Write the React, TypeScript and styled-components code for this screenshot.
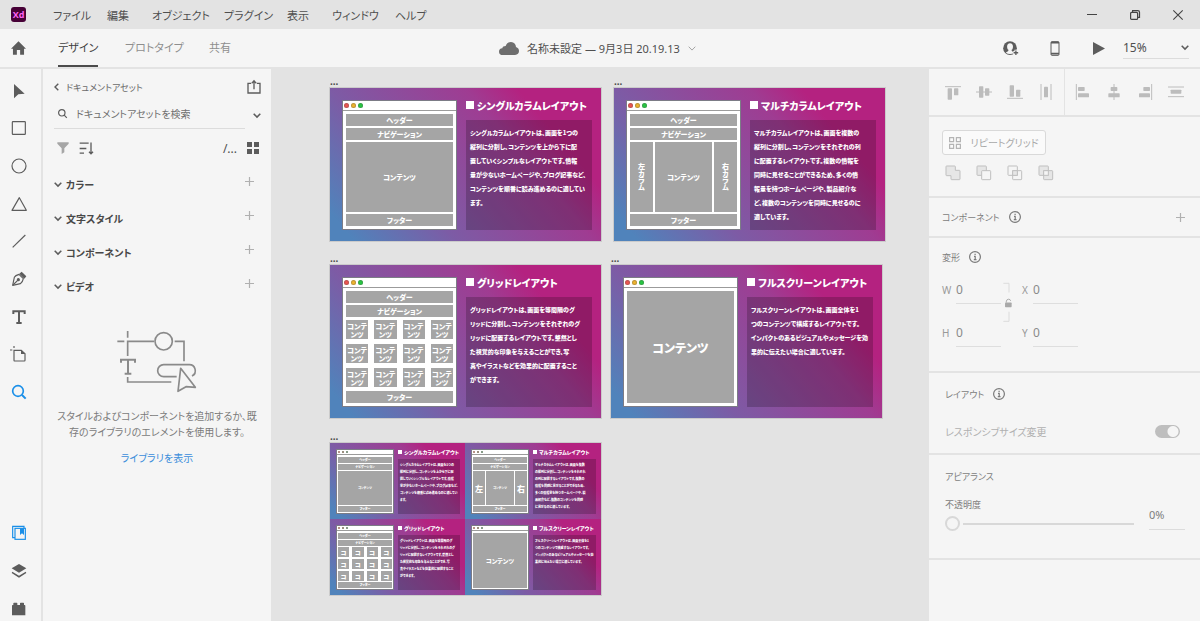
import React from "react";
import styled, { createGlobalStyle, css } from "styled-components";

const LINE = "#e3e3e3";
const PANEL = "#f5f5f5";
const DARK = "#5c5c5c";

const GlobalStyle = createGlobalStyle`
  * { box-sizing: border-box; }
  html, body, #root { height: 100%; }
  body {
    margin: 0;
    background: ${LINE};
    color: #4f4f4f;
    font-family: "Noto Sans", "Noto Sans CJK JP", sans-serif;
    font-size: 12px;
    font-feature-settings: "palt";
    overflow: hidden;
  }
  button, input, select { font: inherit; color: inherit; font-feature-settings: inherit; }
  h2, h3, p { margin: 0; font-weight: inherit; font-size: inherit; }
`;

/* ---------- shared parts ---------- */

const PlainButton = styled.button`
  display: flex;
  align-items: center;
  justify-content: center;
  padding: 0;
  border: 0;
  background: none;
  white-space: nowrap;
`;

const IconButton = styled(PlainButton)<{ $w?: number; $h?: number }>`
  width: ${(p) => p.$w ?? 24}px;
  height: ${(p) => p.$h ?? 24}px;
  flex: none;
`;

const Svg = styled.svg`
  display: block;
  flex: none;
  overflow: visible;
`;

type IconProps = {
  box: string;
  w: number;
  h: number;
  color?: string;
  stroke?: number;
  children: React.ReactNode;
};

/* Line icon: children inherit an outline unless they set their own fill. */
const Icon = ({ box, w, h, color = DARK, stroke = 4, children }: IconProps) => (
  <Svg viewBox={box} width={w} height={h} fill="none" stroke={color} color={color} strokeWidth={stroke} aria-hidden="true">
    {children}
  </Svg>
);

const Solid = ({ box, w, h, color = DARK, children }: IconProps) => (
  <Svg viewBox={box} width={w} height={h} fill={color} aria-hidden="true">
    {children}
  </Svg>
);

const ChevronDown = ({ color = DARK, thin = false }: { color?: string; thin?: boolean }) => (
  <Icon box="0 0 8 5" w={8} h={5} color={color} stroke={thin ? 1 : 1.5}>
    <path d="M.7 .7 4 4.1 7.3 .7" />
  </Icon>
);

const Plus = () => (
  <Icon box="0 0 9 9" w={9} h={9} color="#b0b0b0" stroke={1.2}>
    <path d="M4.5 0v9M0 4.5h9" />
  </Icon>
);

/* ---------- page frame ---------- */

const Page = styled.div`
  display: flex;
  flex-direction: column;
  height: 100vh;
  min-width: 900px;
`;

const TitleBar = styled.header`
  display: flex;
  align-items: center;
  height: 29px;
  flex: none;
  padding: 0 6px 0 11px;
`;

const Logo = styled.div`
  display: grid;
  place-items: center;
  width: 15px;
  height: 15px;
  border-radius: 3px;
  background: #470137;
  color: #ff61f6;
  font: bold 9px/15px "Open Sans", sans-serif;
  margin-right: 27px;
`;

const Menu = styled.nav`
  display: grid;
  grid-template-columns: 54px 45px 72px 63px 45px 63px auto;
  flex: 1;
`;

const MenuItem = styled(PlainButton)`
  justify-content: flex-start;
  height: 28px;
  font-size: 11px;
`;

const WindowButtons = styled.div`
  display: flex;
  gap: 11px;
`;

const Toolbar = styled.div`
  display: flex;
  height: 40px;
  flex: none;
  background: ${PANEL};
  border-bottom: 2px solid ${LINE};
`;

const ToolbarSide = styled.div<{ $end?: boolean }>`
  flex: 1;
  display: flex;
  align-items: center;
  ${(p) => (p.$end ? "justify-content: flex-end; padding-right: 11px;" : "padding-left: 6px;")}
`;

const Tabs = styled.div`
  display: grid;
  grid-template-columns: 67px 84px auto;
  justify-items: start;
  height: 38px;
  margin-left: 28px;
`;

const Tab = styled(PlainButton)<{ $active?: boolean }>`
  height: 38px;
  font-size: 11px;
  color: ${(p) => (p.$active ? "#3f3f3f" : "#8e8e8e")};
  border-bottom: 2px solid ${(p) => (p.$active ? "#4b4b4b" : "transparent")};
`;

const DocTitle = styled(PlainButton)`
  gap: 8px;
  font-size: 11px;
`;

const TopActions = styled.div`
  display: flex;
  gap: 20px;
  margin-right: 12px;
`;

const ZoomBox = styled.label`
  position: relative;
  width: 66px;
  height: 22px;
  border-bottom: 1px solid #dcdcdc;

  select {
    appearance: none;
    width: 100%;
    height: 20px;
    padding: 0;
    border: 0;
    background: none;
    font-size: 12px;
  }
  svg {
    position: absolute;
    right: 0;
    top: 8px;
    pointer-events: none;
  }
`;

const Body = styled.div`
  display: flex;
  flex: 1;
  min-height: 0;
`;

/* ---------- tool rail ---------- */

const Rail = styled.aside`
  width: 43px;
  flex: none;
  display: flex;
  flex-direction: column;
  justify-content: space-between;
  padding-top: 3px;
  background: ${PANEL};
  border-right: 2px solid ${LINE};
`;

const Tools = styled.div`
  display: grid;
  grid-auto-rows: 1fr;
  height: 339px;
  width: 37px;
`;

const RailBottom = styled.div`
  display: flex;
  flex-direction: column;
  gap: 14px;
  width: 37px;
`;

const Tool = styled(PlainButton)`
  width: 37px;
  min-height: 24px;
`;

/* ---------- assets panel ---------- */

const Assets = styled.aside`
  width: 228px;
  flex: none;
  padding: 4px 2px 0 11px;
  background: ${PANEL};
`;

const Row = styled.div<{ $h: number }>`
  display: flex;
  align-items: center;
  height: ${(p) => p.$h}px;
`;

const Spacer = styled.div`
  flex: 1;
`;

const BackButton = styled(PlainButton)`
  gap: 7px;
  font-size: 9px;
  color: #6a6a6a;
`;

const SearchField = styled.label`
  display: flex;
  align-items: center;
  gap: 9px;
  flex: 1;
  height: 28px;
  padding: 0 0 2px 4px;
  border-bottom: 1px solid #dcdcdc;

  input {
    flex: 1;
    min-width: 0;
    padding: 0;
    border: 0;
    outline: 0;
    background: none;
    font-size: 10px;
  }
  input::placeholder {
    color: #6f6f6f;
    opacity: 1;
  }
`;

const Category = styled(PlainButton)`
  gap: 4px;
  font-size: 10px;
  font-weight: 700;
  color: #484848;
`;

const CategoryRow = styled(Row)`
  & > :last-child {
    align-self: flex-start;
    margin-right: 8px;
  }
`;

const Empty = styled.div`
  display: flex;
  flex-direction: column;
  align-items: center;
  padding-top: 27px;
  padding-right: 9px;
  font-size: 10px;
  line-height: 16px;
  color: #7b7b7b;
  text-align: center;

  p { margin: 15px 0 10px; white-space: nowrap; }
  a { color: #3a8ddb; text-decoration: none; }
`;

/* ---------- canvas ---------- */

const Canvas = styled.main`
  position: relative;
  flex: 1;
  min-width: 0;
  overflow: hidden;
  font-family: "Noto Sans CJK JP", sans-serif;
  color: #fff;
  font-weight: 900;
`;

const Artboard = styled.section<{ $x: number; $y: number }>`
  position: absolute;
  left: ${(p) => p.$x}px;
  top: ${(p) => p.$y}px;
  width: 271px;
`;

const ArtboardName = styled.h2`
  height: 10px;
  font: 700 10px/6px "Noto Sans", sans-serif;
  color: #4a4a4a;
`;

const Sheet = styled.div`
  display: grid;
  grid-template-columns: minmax(0, 1fr);
  box-shadow: 0 0 0 1px #cbcbcb;
`;

const SheetGrid = styled(Sheet)`
  grid-template-columns: 135px 136px;
`;

type Size = { $mini?: boolean };

const Slide = styled.article<Size>`
  display: flex;
  background: linear-gradient(50deg, #5083bb 6%, #7d5ba5 32%, #9f3c92 66%, #b42280 79%);
  ${(p) =>
    p.$mini
      ? css`height: 76px; gap: 4px; padding: 6px 5px 5px 6px;`
      : css`height: 153px; gap: 9px; padding: 12px 9px 11px 12px;`}
`;

const Browser = styled.div<Size>`
  display: flex;
  flex-direction: column;
  flex: none;
  width: ${(p) => (p.$mini ? 58 : 115)}px;
  background: #fff;
  border: 1px solid #7c7c86;
`;

const BrowserBar = styled.div<Size>`
  display: flex;
  align-items: center;
  flex: none;
  gap: 2px;
  height: ${(p) => (p.$mini ? 5 : 10)}px;
  padding-left: 1px;
  border-bottom: 1px solid #9b9b9b;
`;

const Dot = styled.i<Size & { $c: string }>`
  width: ${(p) => (p.$mini ? 2 : 5)}px;
  height: ${(p) => (p.$mini ? 2 : 5)}px;
  border-radius: 50%;
  background: ${(p) => p.$c};
  ${(p) => !p.$mini && "box-shadow: inset 0 0 0 1px rgba(90, 90, 90, 0.35);"}
`;

const BrowserBody = styled.div<Size>`
  flex: 1;
  min-height: 0;
  display: flex;
  flex-direction: column;
  ${(p) =>
    p.$mini ? css`gap: 1px; padding: 2px 1px 1px 1px;` : css`gap: 2px; padding: 3px;`}
`;

const Block = styled.div<{ $h?: number; $w?: number; $fs: number; $vertical?: boolean }>`
  display: flex;
  align-items: center;
  justify-content: center;
  min-width: 0;
  overflow: hidden;
  white-space: pre;
  text-align: center;
  background: #a5a5a5;
  flex: ${(p) => (p.$h || p.$w ? "none" : "1")};
  ${(p) => p.$h && `height: ${p.$h}px;`}
  ${(p) => p.$w && `width: ${p.$w}px;`}
  font-size: ${(p) => p.$fs}px;
  line-height: ${(p) => p.$fs + 1}px;
  ${(p) => p.$vertical && "writing-mode: vertical-rl; font-feature-settings: normal;"}
`;

const Columns = styled.div<Size>`
  flex: 1;
  display: flex;
  gap: ${(p) => (p.$mini ? 1 : 2)}px;
`;

const Tiles = styled.div<Size>`
  flex: 1;
  display: grid;
  grid-template-columns: repeat(4, 1fr);
  grid-auto-rows: 1fr;
  gap: ${(p) => (p.$mini ? "2px 3px" : "5px 6px")};
  padding: ${(p) => (p.$mini ? "0" : "1px 0 2px")};
`;

const Copy = styled.div`
  flex: 1;
  min-width: 0;
  display: flex;
  flex-direction: column;
`;

const SlideTitle = styled.h3<Size>`
  display: flex;
  align-items: center;
  white-space: nowrap;
  ${(p) =>
    p.$mini
      ? css`height: 5px; gap: 2px; margin-bottom: 5px; font-size: 5px;`
      : css`height: 10px; gap: 3px; margin-bottom: 10px; font-size: 10px;`}
  &::before {
    content: "";
    width: ${(p) => (p.$mini ? 4 : 8)}px;
    height: ${(p) => (p.$mini ? 4 : 8)}px;
    background: #fff;
  }
`;

const SlideText = styled.p<Size>`
  flex: 1;
  white-space: pre;
  background: rgba(0, 0, 0, 0.2);
  ${(p) =>
    p.$mini
      ? css`padding: 3px 2px; font-size: 3px; line-height: 7px;`
      : css`padding: 6px 4px; font-size: 6px; line-height: 14px;`}
`;

type Kind = "single" | "multi" | "grid" | "full";

const slides: Record<Kind, { title: string; text: string[]; miniText?: string[] }> = {
  single: {
    title: "シングルカラムレイアウト",
    text: [
      "シングルカラムレイアウトは、画面を1つの",
      "縦列に分割し、コンテンツを上から下に配",
      "置していくシンプルなレイアウトです。情報",
      "量が少ないホームページや、ブログ記事など、",
      "コンテンツを順番に読み進めるのに適してい",
      "ます。",
    ],
  },
  multi: {
    title: "マルチカラムレイアウト",
    text: [
      "マルチカラムレイアウトは、画面を複数の",
      "縦列に分割し、コンテンツをそれぞれの列",
      "に配置するレイアウトです。複数の情報を",
      "同時に見せることができるため、多くの情",
      "報量を持つホームページや、製品紹介な",
      "ど、複数のコンテンツを同時に見せるのに",
      "適しています。",
    ],
    miniText: [
      "マルチカラムレイアウトは、画面を複数",
      "の縦列に分割し、コンテンツをそれぞれ",
      "の列に配置するレイアウトです。複数の",
      "情報を同時に見せることができるため、",
      "多くの情報量を持つホームページや、製",
      "品紹介など、複数のコンテンツを同時",
      "に見せるのに適しています。",
    ],
  },
  grid: {
    title: "グリッドレイアウト",
    text: [
      "グリッドレイアウトは、画面を等間隔のグ",
      "リッドに分割し、コンテンツをそれぞれのグ",
      "リッドに配置するレイアウトです。整然とし",
      "た視覚的な印象を与えることができ、写",
      "真やイラストなどを効果的に配置すること",
      "ができます。",
    ],
  },
  full: {
    title: "フルスクリーンレイアウト",
    text: [
      "フルスクリーンレイアウトは、画面全体を1",
      "つのコンテンツで構成するレイアウトです。",
      "インパクトのあるビジュアルやメッセージを効",
      "果的に伝えたい場合に適しています。",
    ],
  },
};

const Wireframe = ({ kind, mini }: { kind: Kind; mini?: boolean }) => {
  const fs = mini ? 3 : 7;
  const bar = mini ? 6 : 12;
  if (kind === "full") return <Block $fs={mini ? 6 : 12}>コンテンツ</Block>;
  return (
    <>
      <Block $h={bar} $fs={fs}>ヘッダー</Block>
      <Block $h={bar} $fs={fs}>ナビゲーション</Block>
      {kind === "single" && <Block $fs={fs}>コンテンツ</Block>}
      {kind === "multi" && (
        <Columns $mini={mini}>
          <Block $w={mini ? 12 : 23} $fs={mini ? 8 : 7} $vertical={!mini}>{mini ? "左" : "左カラム"}</Block>
          <Block $fs={fs}>コンテンツ</Block>
          <Block $w={mini ? 12 : 23} $fs={mini ? 8 : 7} $vertical={!mini}>{mini ? "右" : "右カラム"}</Block>
        </Columns>
      )}
      {kind === "grid" && (
        <Tiles $mini={mini}>
          {Array.from({ length: 12 }, (_, i) => (
            <Block key={i} $fs={mini ? 6 : 7}>{mini ? "コ" : "コンテ\nンツ"}</Block>
          ))}
        </Tiles>
      )}
      <Block $h={bar} $fs={fs}>フッター</Block>
    </>
  );
};

const LayoutSlide = ({ kind, mini }: { kind: Kind; mini?: boolean }) => {
  const { title, text, miniText } = slides[kind];
  return (
    <Slide $mini={mini}>
      <Browser $mini={mini}>
        <BrowserBar $mini={mini}>
          {(mini ? ["#a07060", "#7a6a55", "#5f7a60"] : ["#ee5550", "#f0b52c", "#26c940"]).map((c) => (
            <Dot key={c} $c={c} $mini={mini} />
          ))}
        </BrowserBar>
        <BrowserBody $mini={mini}>
          <Wireframe kind={kind} mini={mini} />
        </BrowserBody>
      </Browser>
      <Copy>
        <SlideTitle $mini={mini}>{title}</SlideTitle>
        <SlideText $mini={mini}>{((mini && miniText) || text).join("\n")}</SlideText>
      </Copy>
    </Slide>
  );
};

const boards: { kind: Kind; x: number; y: number }[] = [
  { kind: "single", x: 59, y: 9 },
  { kind: "multi", x: 343, y: 9 },
  { kind: "grid", x: 59, y: 186 },
  { kind: "full", x: 340, y: 186 },
];

/* ---------- inspector ---------- */

const Inspector = styled.aside`
  width: 271px;
  flex: none;
  background: ${PANEL};
  font-size: 10px;
  color: #7d7d7d;
`;

const Section = styled.section<{ $pad: string }>`
  padding: ${(p) => p.$pad};
  border-bottom: 2px solid ${LINE};
`;

const AlignBar = styled.div`
  display: grid;
  grid-template-columns: 135px 136px;
  height: 48px;
  border-bottom: 2px solid ${LINE};
`;

const AlignGroup = styled.div`
  display: flex;
  align-items: center;
  gap: 7px;
  padding-left: 12px;

  & + & {
    padding-left: 6px;
    border-left: 1px solid ${LINE};
  }
`;

const RepeatButton = styled(PlainButton)`
  gap: 9px;
  width: 104px;
  height: 25px;
  border: 1px solid #d9d9d9;
  border-radius: 3px;
  background: #fafafa;
  color: #a9a9a9;
  font-size: 10px;
`;

const Booleans = styled.div`
  display: flex;
  gap: 7px;
  margin: 6px 0 0 -1px;
`;

const Heading = styled.h2`
  display: flex;
  align-items: center;
  gap: 9px;
  height: 20px;
  font-size: 9px;
`;

const TransformGrid = styled.div`
  display: grid;
  grid-template-columns: 59px 21px 56px;
  row-gap: 15px;
  margin-top: 9px;

  & > svg {
    grid-area: 1 / 2 / 3 / 3;
    margin: 6px 0 0 1px;
  }
`;

const Field = styled.label<{ $label: number }>`
  display: grid;
  grid-template-columns: ${(p) => p.$label}px 45px;
  align-items: center;
  height: 28px;
  color: #999;

  input {
    width: 100%;
    height: 28px;
    padding: 0;
    border: 0;
    border-bottom: 1px solid #dedede;
    border-radius: 0;
    outline: 0;
    background: none;
    font-size: 12px;
    color: #8a8a8a;
  }
`;

const SwitchRow = styled.label`
  display: flex;
  align-items: center;
  justify-content: space-between;
  height: 24px;
  margin-top: 15px;
  color: #b0b0b0;
  font-size: 10px;
`;

const Switch = styled.input`
  appearance: none;
  width: 25px;
  height: 13px;
  margin: 0;
  border-radius: 7px;
  background: radial-gradient(circle at 18px 50%, ${PANEL} 5px, #bebebe 6px);
`;

const Opacity = styled.div`
  display: grid;
  grid-template-columns: 189px 36px;
  gap: 15px;
  margin-top: 11px;

  label { display: block; height: 16px; line-height: 16px; font-size: 9px; margin-bottom: 4px; }
`;

const Slider = styled.input`
  appearance: none;
  display: block;
  width: 100%;
  height: 14px;
  margin: 0;
  background: none;

  &::-webkit-slider-runnable-track {
    height: 2px;
    background: linear-gradient(to right, transparent 18px, #d8d8d8 18px);
  }
  &::-webkit-slider-thumb {
    appearance: none;
    width: 15px;
    height: 15px;
    margin-top: -7px;
    border: 2px solid #d8d8d8;
    border-radius: 50%;
    background: ${PANEL};
  }
`;

const OpacityValue = styled.input`
  width: 36px;
  height: 28px;
  margin-top: 5px;
  padding: 0 0 3px;
  border: 0;
  border-bottom: 1px solid #dcdcdc;
  outline: 0;
  background: none;
  font-size: 11px;
`;

const InfoIcon = () => (
  <Icon box="0 0 12 12" w={12} h={12} color="#7a7a7a" stroke={1.2}>
    <circle cx="6" cy="6" r="5.4" />
    <path d="M5 5.3h1.2v3.2M4.8 8.6h2.7M5.5 3.3h1.2" />
  </Icon>
);

type Bar = readonly [number, number, number, number];
type AlignItem = { name: string; lines: string; bars: readonly Bar[] };

const AlignIcon = ({ lines, bars }: Omit<AlignItem, "name">) => (
  <Icon box="0 0 48 48" w={16} h={16} color="#bcbcbc" stroke={3}>
    <path d={lines} />
    {bars.map(([x, y, w, h]) => (
      <rect key={`${x}-${y}`} x={x} y={y} width={w} height={h} rx="2" fill="currentColor" stroke="none" />
    ))}
  </Icon>
);

const alignVertical: AlignItem[] = [
  { name: "上揃え", lines: "M0 8h48", bars: [[8, 13, 13, 34], [27, 13, 13, 21]] },
  { name: "中央揃え (垂直方向)", lines: "M0 24h48", bars: [[9, 7, 13, 34], [27, 13, 13, 22]] },
  { name: "下揃え", lines: "M0 43h48", bars: [[8, 4, 13, 34], [27, 17, 13, 21]] },
  { name: "水平方向に分布", lines: "M9 0v48M39 0v48", bars: [[18, 8, 12, 32]] },
];

const alignHorizontal: AlignItem[] = [
  { name: "左揃え", lines: "M4 0v48", bars: [[9, 9, 20, 12], [9, 28, 33, 12]] },
  { name: "中央揃え (水平方向)", lines: "M24 0v48", bars: [[14, 9, 20, 12], [7, 28, 34, 12]] },
  { name: "右揃え", lines: "M44 0v48", bars: [[19, 9, 20, 12], [6, 28, 33, 12]] },
  { name: "垂直方向に分布", lines: "M0 9h48M0 38h48", bars: [[8, 17, 32, 12]] },
];

const BOOL_FILL = "#e6e6e6";
const booleanIcons = [
  {
    name: "合体",
    art: <path d="M3 5q0-2 2-2h24q2 0 2 2v11h12q2 0 2 2v24q0 2-2 2H20q-2 0-2-2V32H5q-2 0-2-2Z" fill={BOOL_FILL} />,
  },
  {
    name: "前面オブジェクトで型抜き",
    art: (
      <>
        <rect x="3" y="3" width="28" height="28" rx="2" fill={BOOL_FILL} />
        <rect x="17" y="17" width="27" height="27" rx="2" fill={PANEL} />
      </>
    ),
  },
  {
    name: "交差",
    art: (
      <>
        <rect x="3" y="3" width="28" height="28" rx="2" />
        <rect x="17" y="17" width="27" height="27" rx="2" />
        <rect x="17" y="17" width="14" height="14" fill={BOOL_FILL} />
      </>
    ),
  },
  {
    name: "中マド",
    art: (
      <>
        <rect x="3" y="3" width="28" height="28" rx="2" fill={BOOL_FILL} />
        <rect x="17" y="17" width="27" height="27" rx="2" fill={BOOL_FILL} />
        <rect x="17" y="17" width="14" height="14" fill={PANEL} />
      </>
    ),
  },
];

const BLUE = "#1a8fe8";

const tools: { name: string; art: React.ReactNode; color?: string }[] = [
  { name: "選択", art: <path d="M9 3v43l13-12 19-2Z" fill="currentColor" stroke="none" /> },
  { name: "長方形", art: <rect x="4" y="5" width="39" height="38" rx="2" /> },
  { name: "楕円形", art: <circle cx="24" cy="24" r="21" /> },
  { name: "多角形", art: <path d="M25 5 46 43H3Z" strokeLinejoin="round" /> },
  { name: "線", art: <path d="M5 43 43 6" /> },
  {
    name: "ペン",
    art: (
      <>
        <path d="M5 43 10 19q3-6 14-9l13 13q-2 11-9 15Z" strokeLinejoin="round" />
        <path d="M6 42 20 28" />
        <circle cx="22" cy="26" r="3" fill="currentColor" />
        <path d="m25 8 7-6 14 14-6 7Z" fill="currentColor" stroke="none" />
      </>
    ),
  },
  {
    name: "テキスト",
    art: <path d="M7 15V7h34v8M24 7v35M16 42h16" strokeWidth="6" />,
  },
  {
    name: "アートボード",
    art: (
      <>
        <path d="M9 13h22l11 10v20q0 2-2 2H10q-1 0-1-2Z" />
        <path d="M30 12v12h13Z" fill="currentColor" stroke="none" />
        <path d="M-3 12h7M9 0v6" />
      </>
    ),
  },
  {
    name: "ズーム",
    color: BLUE,
    art: (
      <>
        <circle cx="21" cy="21" r="16" strokeWidth="5" />
        <path d="m33 33 11 11" strokeWidth="6" />
      </>
    ),
  },
];

const panels: { name: string; art: React.ReactNode; color?: string }[] = [
  {
    name: "ライブラリ",
    color: BLUE,
    art: (
      <>
        <path d="M12 38H5V4h34v6" />
        <rect x="12" y="10" width="31" height="33" />
        <path d="M27 10h12v20l-6-5-6 5Z" fill="currentColor" stroke="none" />
      </>
    ),
  },
  {
    name: "レイヤー",
    art: (
      <>
        <path d="M24 3 46 16 24 29 2 16Z" fill="currentColor" stroke="none" />
        <path d="m4 26 20 12 20-12 2 4-22 14L2 30Z" fill="currentColor" stroke="none" />
      </>
    ),
  },
  {
    name: "プラグイン",
    art: <path d="M3 14q0-2 2-2h2V7q0-2 2-2h8q2 0 2 2v5h8V7q0-2 2-2h8q2 0 2 2v5h2q2 0 2 2v29H3Z" fill="currentColor" stroke="none" />,
  },
];

const RailTools = ({ items }: { items: typeof tools }) => (
  <>
    {items.map((t) => (
      <Tool key={t.name} type="button" aria-label={t.name}>
        <Icon box="0 0 48 48" w={16} h={16} color={t.color} stroke={3.5}>
          {t.art}
        </Icon>
      </Tool>
    ))}
  </>
);

const EmptyArt = () => (
  <Icon box="351 90 240 189" w={80} h={63} color="#8a8a8a" stroke={5}>
    <path d="M383 93v20M352 124h21M383 168V124h79M524 124h28v60M383 231v15h131" />
    <circle cx="491" cy="124" r="26" />
    <path d="M363 188v-9h42v9M384 179v42M374 221h20" strokeWidth="6" />
    <path d="M530 230h-39a18 18 0 0 1 0-36h76a18 18 0 0 1 9 34" />
    <path d="m542 205 44 57-28-2-24 14Z" strokeLinejoin="round" />
  </Icon>
);

const LinkLock = () => (
  <Icon box="246 280 36 124" w={12} h={41} color="#dcdcdc" stroke={3}>
    <path d="M250 284h17v28M250 399h17v-29" />
    <rect x="255" y="342" width="20" height="14" rx="2" fill="#a9a9a9" stroke="none" />
    <path d="M259 342v-4q1-6 7-6 5 0 6 5" stroke="#a9a9a9" />
  </Icon>
);

export default function App() {
  return (
    <Page>
      <GlobalStyle />
      <TitleBar>
        <Logo>Xd</Logo>
        <Menu>
          {["ファイル", "編集", "オブジェクト", "プラグイン", "表示", "ウィンドウ", "ヘルプ"].map((m) => (
            <MenuItem key={m} type="button">{m}</MenuItem>
          ))}
        </Menu>
        <WindowButtons>
          <IconButton $w={32} type="button" aria-label="最小化">
            <Icon box="0 0 10 10" w={10} h={10} color="#444" stroke={1}><path d="M0 4.5h10" /></Icon>
          </IconButton>
          <IconButton $w={32} type="button" aria-label="元に戻す">
            <Icon box="0 0 10 10" w={10} h={10} color="#444" stroke={1.2}>
              <rect x=".6" y="2.4" width="7" height="7" rx="1" />
              <path d="M2.6 2V.6h5.2q1.7 0 1.7 1.7v5.1H8" />
            </Icon>
          </IconButton>
          <IconButton $w={32} type="button" aria-label="閉じる">
            <Icon box="0 0 10 10" w={10} h={10} color="#444" stroke={1.1}><path d="m.3 .3 9.4 9.4M9.7 .3.3 9.7" /></Icon>
          </IconButton>
        </WindowButtons>
      </TitleBar>

      <Toolbar>
        <ToolbarSide>
          <IconButton type="button" aria-label="ホーム">
            <Solid box="33 122 46 42" w={15} h={14}>
              <path d="M56 122 79 145h-6v19H61v-15H51v15H39v-19h-6Z" />
            </Solid>
          </IconButton>
          <Tabs role="tablist">
            <Tab $active role="tab" aria-selected="true" type="button">デザイン</Tab>
            <Tab role="tab" aria-selected="false" type="button">プロトタイプ</Tab>
            <Tab role="tab" aria-selected="false" type="button">共有</Tab>
          </Tabs>
        </ToolbarSide>
        <DocTitle type="button">
          <Solid box="182 123 60 39" w={20} h={13} color="#6e6e6e">
            <path d="M194 162q-12 0-12-10 0-9 10-10 1-7 10-7 4-12 16-12 14 1 15 15 9 3 9 12 0 11-12 12Z" />
          </Solid>
          名称未設定 — 9月3日 20.19.13
          <ChevronDown color="#a5a5a5" thin />
        </DocTitle>
        <ToolbarSide $end>
          <TopActions>
            <IconButton type="button" aria-label="招待">
              <Svg viewBox="0 0 48 46" width="16" height="15" aria-hidden="true">
                <circle cx="21" cy="22" r="21" fill={DARK} />
                <ellipse cx="21" cy="18" rx="9" ry="11" fill={PANEL} />
                <path d="M17 27h8q0 5 9 8-5 5-13 5T8 35q9-3 9-8Z" fill={PANEL} />
                <path d="M39 27v19M30 36h18" stroke={PANEL} strokeWidth="9" />
                <path d="M39 29v14M32 36h14" stroke={DARK} strokeWidth="4" />
              </Svg>
            </IconButton>
            <IconButton type="button" aria-label="デバイスプレビュー">
              <Icon box="0 0 30 45" w={10} h={15} stroke={3}>
                <rect x="3" y="2" width="24" height="41" rx="3" />
                <path d="M3 5h24M3 38h24" strokeWidth="5" />
              </Icon>
            </IconButton>
            <IconButton type="button" aria-label="プレビュー">
              <Solid box="0 0 12 13" w={12} h={13}><path d="M0 0 12 6.5 0 13Z" /></Solid>
            </IconButton>
          </TopActions>
          <ZoomBox>
            <select aria-label="ズーム" defaultValue="15%">
              <option>15%</option>
            </select>
            <ChevronDown />
          </ZoomBox>
        </ToolbarSide>
      </Toolbar>

      <Body>
        <Rail>
          <Tools><RailTools items={tools} /></Tools>
          <RailBottom><RailTools items={panels} /></RailBottom>
        </Rail>

        <Assets>
          <Row $h={28}>
            <BackButton type="button">
              <Icon box="0 0 5 8" w={5} h={8} stroke={1.4}><path d="M4.3 .7 1 4l3.3 3.3" /></Icon>
              ドキュメントアセット
            </BackButton>
            <Spacer />
            <IconButton $w={30} type="button" aria-label="共有">
              <Icon box="741 240 40 42" w={14} h={14}>
                <path d="M752 250h-9v29h36v-29h-9M761 268v-22M754 250l7-8 7 8" />
              </Icon>
            </IconButton>
          </Row>
          <Row $h={28}>
            <SearchField>
              <Icon box="0 0 9 9" w={9} h={9} stroke={1.2}>
                <circle cx="3.8" cy="3.8" r="3.2" /><path d="M6.2 6.2 8.8 8.8" />
              </Icon>
              <input type="search" aria-label="ドキュメントアセットを検索" placeholder="ドキュメントアセットを検索" />
            </SearchField>
            <IconButton type="button" aria-label="検索対象"><ChevronDown /></IconButton>
          </Row>
          <Row $h={38}>
            <IconButton $w={17} type="button" aria-label="フィルター">
              <Solid box="0 0 36 36" w={12} h={12} color="#a6a6a6">
                <path d="M1 1h34v4L22 19v12l-8 5V19L1 5Z" />
              </Solid>
            </IconButton>
            <IconButton $w={30} type="button" aria-label="並べ替え">
              <Icon box="0 0 42 38" w={14} h={13}>
                <path d="M2 3h27M2 19h20M2 33h13M36 1v34M30 29l6 6 6-6" />
              </Icon>
            </IconButton>
            <Spacer />
            <PlainButton type="button" aria-label="パス">/...</PlainButton>
            <IconButton $w={32} type="button" aria-label="グリッド表示">
              <Solid box="0 0 12 12" w={12} h={12}>
                <path d="M0 0h5v5H0ZM7 0h5v5H7ZM0 7h5v5H0ZM7 7h5v5H7Z" />
              </Solid>
            </IconButton>
          </Row>
          {["カラー", "文字スタイル", "コンポーネント", "ビデオ"].map((name) => (
            <CategoryRow key={name} $h={34}>
              <Category type="button"><ChevronDown />{name}</Category>
              <Spacer />
              <IconButton $h={28} type="button" aria-label={`${name}を追加`}><Plus /></IconButton>
            </CategoryRow>
          ))}
          <Empty>
            <EmptyArt />
            <p>
              スタイルおよびコンポーネントを追加するか、既
              <br />
              存のライブラリのエレメントを使用します。
            </p>
            <a href="#libraries">ライブラリを表示</a>
          </Empty>
        </Assets>

        <Canvas>
          {boards.map((b) => (
            <Artboard key={b.kind} $x={b.x} $y={b.y}>
              <ArtboardName>...</ArtboardName>
              <Sheet><LayoutSlide kind={b.kind} /></Sheet>
            </Artboard>
          ))}
          <Artboard $x={59} $y={364}>
            <ArtboardName>...</ArtboardName>
            <SheetGrid>
              {boards.map((b) => <LayoutSlide key={b.kind} kind={b.kind} mini />)}
            </SheetGrid>
          </Artboard>
        </Canvas>

        <Inspector>
          <AlignBar>
            {[alignVertical, alignHorizontal].map((group, i) => (
              <AlignGroup key={i}>
                {group.map((a) => (
                  <IconButton key={a.name} type="button" aria-label={a.name}>
                    <AlignIcon lines={a.lines} bars={a.bars} />
                  </IconButton>
                ))}
              </AlignGroup>
            ))}
          </AlignBar>
          <Section $pad="13px 13px 11px">
            <RepeatButton type="button">
              <Icon box="0 0 12 12" w={12} h={12} color="#b4b4b4" stroke={1.2}>
                <path d="M.6 .6h4v4h-4ZM7.4 .6h4v4h-4ZM.6 7.4h4v4h-4ZM7.4 7.4h4v4h-4Z" />
              </Icon>
              リピートグリッド
            </RepeatButton>
            <Booleans>
              {booleanIcons.map((b) => (
                <IconButton key={b.name} type="button" aria-label={b.name}>
                  <Icon box="0 0 48 48" w={16} h={16} color="#bfbfbf" stroke={3}>{b.art}</Icon>
                </IconButton>
              ))}
            </Booleans>
          </Section>
          <Section $pad="9px 8px 9px 13px">
            <Row $h={20}>
              <Heading>コンポーネント<InfoIcon /></Heading>
              <Spacer />
              <IconButton type="button" aria-label="コンポーネントを追加"><Plus /></IconButton>
            </Row>
          </Section>
          <Section $pad="9px 13px 24px">
            <Heading>変形<InfoIcon /></Heading>
            <TransformGrid>
              <Field $label={14}>W<input defaultValue="0" /></Field>
              <LinkLock />
              <Field $label={11}>X<input defaultValue="0" /></Field>
              <Field $label={14}>H<input defaultValue="0" /></Field>
              <Field $label={11}>Y<input defaultValue="0" /></Field>
            </TransformGrid>
          </Section>
          <Section $pad="11px 20px 10px 16px">
            <Heading>レイアウト<InfoIcon /></Heading>
            <SwitchRow>
              レスポンシブサイズ変更
              <Switch type="checkbox" role="switch" defaultChecked />
            </SwitchRow>
          </Section>
          <Section $pad="11px 15px 27px 16px">
            <Heading>アピアランス</Heading>
            <Opacity>
              <div>
                <label htmlFor="opacity">不透明度</label>
                <Slider id="opacity" type="range" min="0" max="100" defaultValue="0" />
              </div>
              <OpacityValue aria-label="不透明度の値" defaultValue="0%" />
            </Opacity>
          </Section>
        </Inspector>
      </Body>
    </Page>
  );
}
